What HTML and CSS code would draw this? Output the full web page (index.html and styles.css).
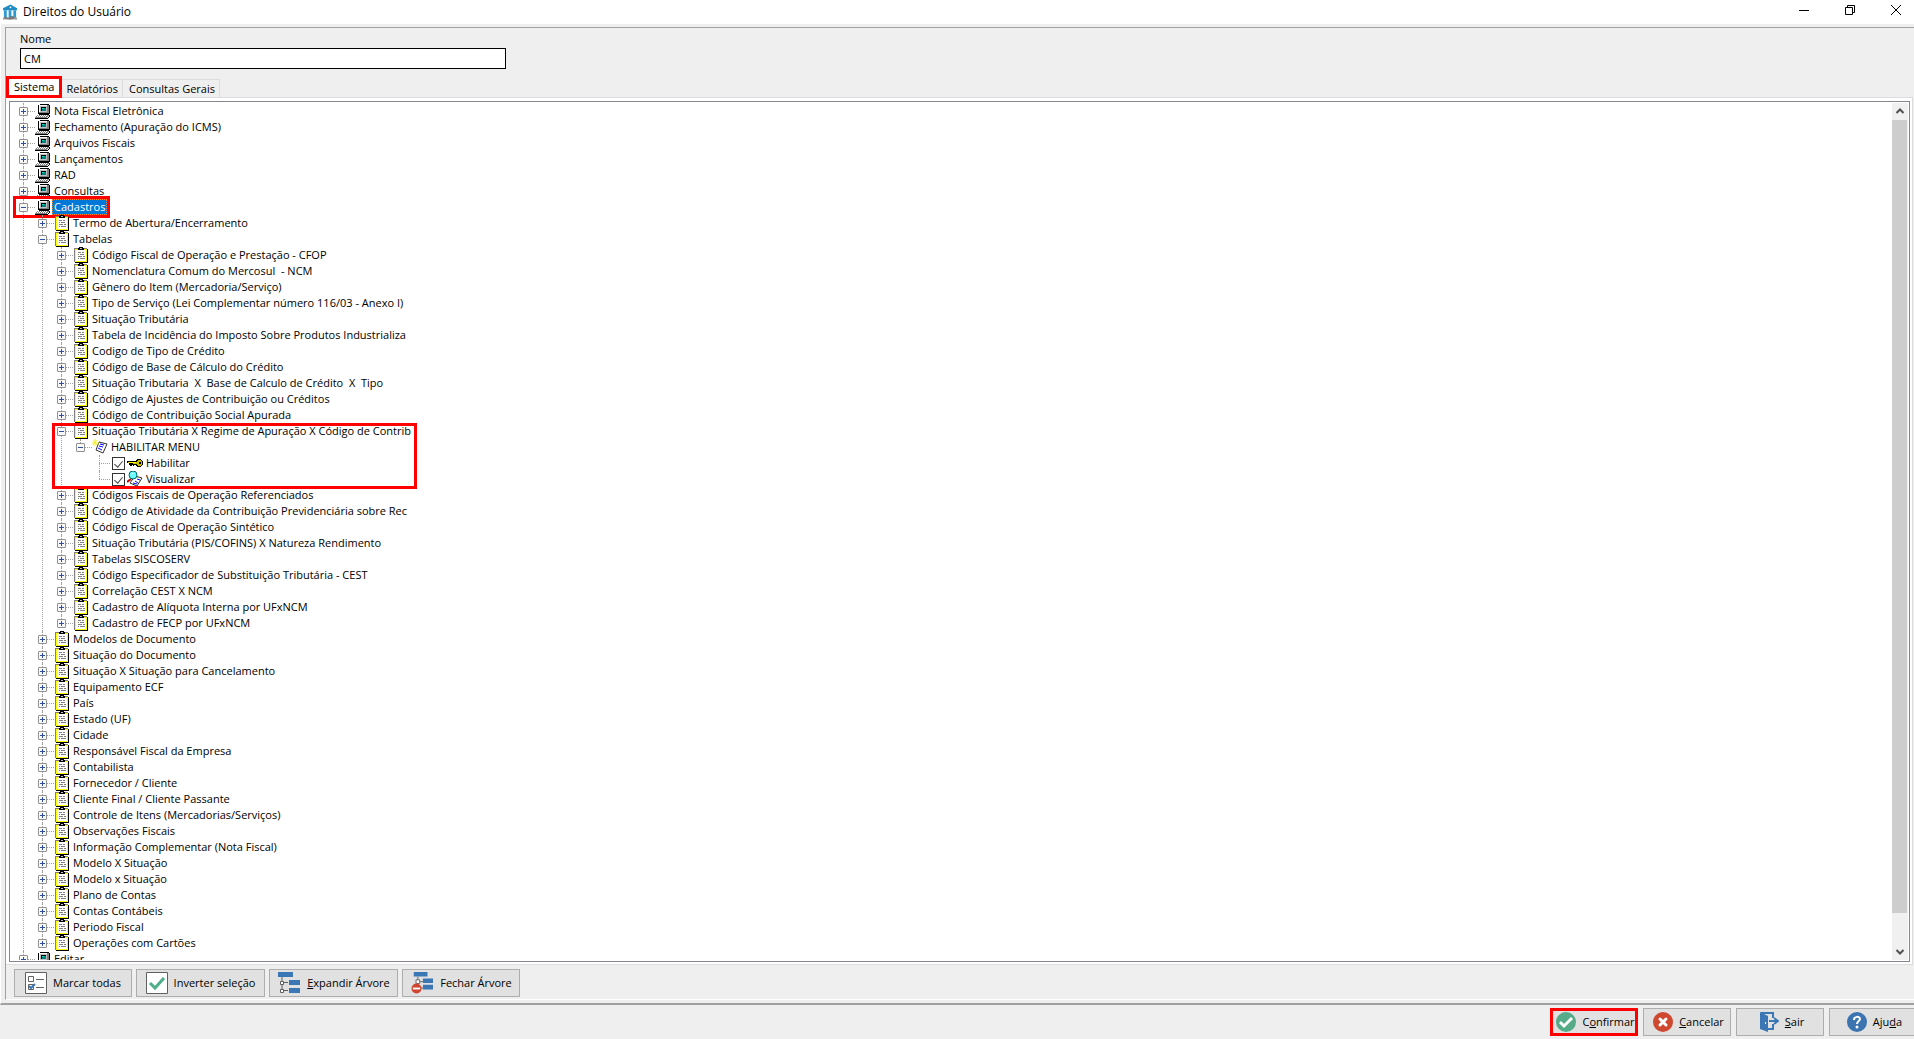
FILE: index.html
```html
<!DOCTYPE html>
<html lang="pt-BR">
<head>
    <meta charset="UTF-8">
    <meta name="viewport" content="width=device-width, initial-scale=1.0">
    <title>Direitos do Usuário</title>
    <link rel="stylesheet" href="styles.css">
</head>
<body>
    <!-- tree icons -->
    <svg class="sprite" aria-hidden="true">
        <symbol id="icon-computer" viewBox="0 0 16 16" shape-rendering="crispEdges">
            <path fill="#000" d="M5 1h9v1h1v9h-1v1H4v-1H3V2h2z"/>
            <path fill="#c0c0c0" d="M4 2h8v8H4z"/>
            <path fill="#808080" d="M12 2h2v8h-2zM4 9h8v1H4z"/>
            <path fill="#fff" d="M4 2h8v1H4zM4 2h1v7H4z"/>
            <path fill="#000" d="M6 4h5v4H6z"/>
            <path fill="#008080" d="M7 5h4v3H7z"/>
            <path fill="#00e0c0" d="M7 5h2v1H7z"/>
            <path fill="#808080" d="M2 12h12v1h-1v1h-1v1H0v-1h1v-1h1z"/>
            <path fill="#fff" d="M3 12h1v1H3zM5 12h1v1H5zM7 12h1v1H7zM9 12h1v1H9zM11 12h1v1h-1zM2 13h1v1H2zM4 13h1v1H4zM6 13h1v1H6zM8 13h1v1H8zM10 13h1v1h-1z"/>
            <path fill="#000" d="M0 15h13v1H0zM13 14h1v1h-1zM14 12h1v2h-1z"/>
        </symbol>
        <symbol id="icon-clipboard" viewBox="0 0 16 16" shape-rendering="crispEdges">
            <path fill="#000" d="M2 2h13v14H2z"/>
            <path fill="#808080" d="M1 1h13v14H1z"/>
            <path fill="#ff0" d="M2 2h12v13H2z"/>
            <path fill="#fff" d="M3 3h10v11H3z"/>
            <path fill="#000" d="M6 0h4v1h1v2H5V1h1z"/>
            <path fill="#c0c0c0" d="M7 1h2v1H7z"/>
            <path fill="#808080" d="M5 5h3v1H5zM9 5h2v1H9zM5 7h1v1H5zM7 7h4v1H7zM5 9h4v1H5zM10 9h2v1h-2zM5 11h1v1H5zM7 11h5v1H7z"/>
        </symbol>
        <symbol id="icon-note" viewBox="0 0 16 16">
            <path d="M7 3l8 2-4 9-7-3z" fill="#fff" stroke="#333"/>
            <path d="M8 5l4 1M7 7l4 1M6 9l4 2" stroke="#00f" fill="none"/>
            <path d="M3 0v7M0 4h7M1 1l4 5M5 1L1 6" stroke="#f5ee31" fill="none"/>
        </symbol>
        <symbol id="icon-key" viewBox="0 0 16 16" shape-rendering="crispEdges">
            <path fill="#000" d="M0 6h9V5h1V4h4v1h1v1h1v4h-1v1h-1v1h-4v-1H9v-1H7v1H6v-1H5v1H3v-1H2V8H0z"/>
            <path fill="#c8c000" d="M1 7h9V6h1V5h3v1h1v4h-1v1h-3v-1h-1V9H6V8H1z"/>
            <path fill="#000" d="M12 7h2v2h-2z"/>
            <path fill="#ff0" d="M2 7h7v1H2z"/>
        </symbol>
        <symbol id="icon-view" viewBox="0 0 16 16">
            <path d="M8 5l7 2-5 8-7-3z" fill="#fff" stroke="#333"/>
            <path d="M10 8l3 1M8 10l3 2M6 12l4 1" stroke="#00f" fill="none"/>
            <path d="M4 8L0 11" stroke="#c00" stroke-width="2"/>
            <circle cx="6" cy="4" r="4" fill="#6ff" stroke="#066"/>
            <path d="M4 4l2-2" stroke="#fff"/>
        </symbol>
    </svg>

    <header class="titlebar">
        <svg class="app-icon" viewBox="0 0 16 17" aria-hidden="true">
            <path d="M0 4L8 0l7 4v2H0z" fill="#1f8cc4"/>
            <circle cx="8" cy="3" r="1" fill="#fff"/>
            <path d="M1 6h3v8H1zM6 6h3v8H6zM11 6h3v8h-3z" fill="#2a9ad2"/>
            <path d="M0 14h15v2H0z" fill="#9a9a9a"/>
            <path d="M1 13l5 1 4-2 3 2-5 2-6-1z" fill="#777"/>
        </svg>
        <h1>Direitos do Usuário</h1>
        <div class="window-controls">
            <button type="button" aria-label="Minimizar"><svg viewBox="0 0 10 10"><path d="M0 5.500h10"/></svg></button>
            <button type="button" aria-label="Restaurar"><svg viewBox="0 0 10 10"><path d="M.5 2.500h7v7h-7zM2.500 2.500v-2h7v7h-2"/></svg></button>
            <button type="button" aria-label="Fechar"><svg viewBox="0 0 10 10"><path d="M0 0l10 10M10 0L0 10"/></svg></button>
        </div>
    </header>

    <main class="content">
        <div class="group">
            <div class="field">
                <label for="nome">Nome</label>
                <input type="text" id="nome" name="nome" value="CM">
            </div>

            <div class="tabs" role="tablist">
                <button type="button" class="tab active" role="tab" aria-selected="true">Sistema</button>
                <button type="button" class="tab" role="tab" aria-selected="false">Relatórios</button>
                <button type="button" class="tab" role="tab" aria-selected="false">Consultas Gerais</button>
            </div>

            <section class="tab-page">
                <div class="tree-box">
                    <ul class="tree" id="tree"></ul>
                    <div class="scrollbar" aria-hidden="true">
                        <svg viewBox="0 0 16 17"><path d="M4.500 10L8 6.500l3.500 3.500"/></svg>
                        <div class="track"><div class="thumb"></div></div>
                        <svg viewBox="0 0 16 17"><path d="M4.500 7L8 10.500 11.500 7"/></svg>
                    </div>
                </div>
            </section>

            <div class="toolbar">
                <button type="button" class="btn">
                    <svg class="icon-box" viewBox="0 0 22 22">
                        <path d="M.5.5h21v21H.5z" fill="#fff" stroke="#606060"/>
                        <path d="M3.500 4.500h5v5h-5zM3.500 12.500h5v5h-5zM11 7.500h8M11 15.500h8" fill="none" stroke="#606060"/>
                        <path d="M4 14l2 2 4-4" fill="none" stroke="#3b77b5" stroke-width="2"/>
                    </svg>
                    <span>Marcar todas</span>
                </button>
                <button type="button" class="btn wide">
                    <svg class="icon-box" viewBox="0 0 22 22">
                        <path d="M.5.5h21v21H.5z" fill="#fff" stroke="#606060"/>
                        <path d="M4 11l5 5 9-10" fill="none" stroke="#4caf87" stroke-width="3"/>
                    </svg>
                    <span>Inverter seleção</span>
                </button>
                <button type="button" class="btn wide">
                    <svg class="icon-tree" viewBox="0 0 24 22">
                        <path d="M5 5v14M5 10.500h6M5 18.500h6" fill="none" stroke="#606060"/>
                        <path d="M1 0h15v5H1zM12 8h11v5H12zM12 16h11v5H12z" fill="#3b77b5"/>
                        <path d="M3.500 9.500h3v3h-3zM3.500 17.500h3v3h-3z" fill="#fff" stroke="#606060"/>
                    </svg>
                    <span><u>E</u>xpandir Árvore</span>
                </button>
                <button type="button" class="btn">
                    <svg class="icon-tree" viewBox="0 0 24 24">
                        <path d="M7.500 5v4M9 10.500h5M10 17.500h4" fill="none" stroke="#606060"/>
                        <path d="M3 0h15v5H3zM13 7h11v5H13zM13 14h11v5H13z" fill="#3b77b5"/>
                        <path d="M5.500 8.500h4v4h-4z" fill="#fff" stroke="#606060"/>
                        <circle cx="6" cy="18" r="5.500" fill="#d0452f"/>
                        <path d="M2 17h8v2H2z" fill="#fff"/>
                    </svg>
                    <span>Fechar Árvore</span>
                </button>
            </div>
        </div>
    </main>

    <footer class="actions">
        <button type="submit" class="btn highlight">
            <svg class="icon-round" viewBox="0 0 20 20">
                <circle cx="10" cy="10" r="10" fill="#55ab88"/>
                <path d="M4 10l4 4 8-8" fill="none" stroke="#fff" stroke-width="3"/>
            </svg>
            <span>C<u>o</u>nfirmar</span>
        </button>
        <button type="button" class="btn">
            <svg class="icon-round" viewBox="0 0 20 20">
                <circle cx="10" cy="10" r="10" fill="#cf4830"/>
                <path d="M7 7l6 6M13 7l-6 6" fill="none" stroke="#fff" stroke-width="3" stroke-linecap="round"/>
            </svg>
            <span><u>C</u>ancelar</span>
        </button>
        <button type="button" class="btn">
            <svg class="icon-round" viewBox="0 0 20 20">
                <path d="M2 1h12v5M14 12v5H9" fill="none" stroke="#3b77b5" stroke-width="2"/>
                <path d="M1 0l8 4v16l-8-3z" fill="#3b77b5"/>
                <path d="M10 9h8M15 6l4 3-4 3" fill="none" stroke="#3b77b5" stroke-width="2"/>
                <path d="M6 10h1v2H6z" fill="#fff"/>
            </svg>
            <span><u>S</u>air</span>
        </button>
        <button type="button" class="btn">
            <svg class="icon-round" viewBox="0 0 20 20">
                <circle cx="10" cy="10" r="10" fill="#3b74b1"/>
                <path d="M7 8c0-4 6-4 6-1 0 2-3 2-3 5" fill="none" stroke="#fff" stroke-width="2"/>
                <circle cx="10" cy="15" r="1.500" fill="#fff"/>
            </svg>
            <span>Aju<u>d</u>a</span>
        </button>
    </footer>

    <script src="tree.js"></script>
</body>
</html>
```

FILE: styles.css
```css
*,
*::before,
*::after {
    box-sizing: border-box;
}

body {
    display: flex;
    flex-direction: column;
    height: 100vh;
    margin: 0;
    overflow: hidden;
    background-color: #efefef;
    color: #000;
    font-family: "Open Sans", "Noto Sans", sans-serif;
    font-size: 11px;
    line-height: 16px;
}

button,
input {
    font: inherit;
    color: inherit;
}

svg {
    display: block;
    flex: none;
}

.sprite {
    position: absolute;
    width: 0;
    height: 0;
}

/* title bar */
.titlebar {
    display: flex;
    align-items: center;
    flex: none;
    height: 24px;
    padding: 0 13px 0 3px;
    background-color: #fff;
}

.titlebar h1 {
    flex: 1;
    margin: 0 0 0 5px;
    font-size: 12px;
    font-weight: normal;
}

.app-icon {
    width: 15px;
    height: 17px;
}

.window-controls {
    display: flex;
    gap: 36px;
    padding-bottom: 4px;
}

.window-controls button {
    padding: 0;
    border: none;
    background: none;
}

.window-controls svg {
    width: 10px;
    height: 10px;
    fill: none;
    stroke: #000;
}

/* main panel */
.content {
    display: flex;
    flex: 1;
    min-height: 0;
    padding: 3px 0 3px 4px;
    border-left: 1px solid #fff;
    border-bottom: 2px solid #a0a0a0;
}

.group {
    display: flex;
    flex-direction: column;
    flex: 1;
    min-width: 0;
    border-top: 1px solid #a0a0a0;
    border-left: 1px solid #a0a0a0;
    border-bottom: 1px solid #fff;
}

.field {
    padding: 3px 14px 7px;
}

.field label {
    display: block;
    margin-bottom: 1px;
}

.field input {
    display: block;
    width: 486px;
    height: 21px;
    padding: 0 3px;
    border: 1px solid #000;
    background-color: #fff;
}

.tabs {
    display: flex;
    align-items: flex-end;
}

.tab {
    height: 18px;
    padding: 0 4px;
    border: 1px solid #dcdcdc;
    border-left: none;
    border-bottom: none;
    background-color: #efefef;
    white-space: nowrap;
}

.tab:last-child {
    padding-left: 6px;
}

.tab.active {
    position: relative;
    height: 22px;
    margin-bottom: -1px;
    padding: 0 5px;
    border: 3px solid #f00;
    background-color: #fff;
}

.tab-page {
    display: flex;
    flex: 1;
    min-height: 0;
    margin-right: 1px;
    padding: 3px 2px 2px 3px;
    border: 1px solid #dcdcdc;
    border-left: none;
    background-color: #fff;
}

.tree-box {
    display: flex;
    flex: 1;
    min-width: 0;
    overflow: hidden;
    padding: 1px;
    border: 1px solid #828790;
}

/* tree */
.tree,
.tree ul {
    margin: 0;
    padding: 0;
    list-style: none;
}

.tree {
    flex: 1;
    overflow: hidden;
    padding-left: 8px;
}

.tree ul {
    padding-left: 19px;
}

.tree li {
    position: relative;
}

/* dotted connector that links an item to the next one */
.tree li::before {
    content: "";
    position: absolute;
    top: 0;
    bottom: 0;
    left: 4px;
    border-left: 1px dotted #a0a0a0;
}

.tree li:last-child::before {
    bottom: auto;
    height: 8px;
}

.row {
    display: flex;
    align-items: center;
    height: 16px;
    white-space: pre;
}

.expander {
    position: relative;
    width: 9px;
    height: 9px;
    flex: none;
    padding: 0;
    border: 1px solid #919191;
    border-radius: 1px;
    background: linear-gradient(#2f4fa0, #2f4fa0) center / 5px 1px no-repeat, #f8f8f8;
}

.expander.closed {
    background: linear-gradient(#2f4fa0, #2f4fa0) center / 5px 1px no-repeat,
        linear-gradient(#2f4fa0, #2f4fa0) center / 1px 5px no-repeat, #f8f8f8;
}

.dots {
    width: 7px;
    flex: none;
    border-top: 1px dotted #a0a0a0;
}

.row .icon {
    width: 16px;
    height: 16px;
    margin-right: 1px;
}

.row .text {
    padding: 0 2px;
}

.row.selected .text {
    background-color: #0078d7;
    color: #fff;
    outline: 1px dotted #f08728;
    outline-offset: -1px;
}

.leaf .dots {
    width: 11px;
    margin-left: 4px;
}

.leaf input {
    appearance: none;
    position: relative;
    flex: none;
    width: 13px;
    height: 13px;
    margin: 0 2px;
    border: 1px solid #333;
    background-color: #fff;
}

.leaf input:checked::after {
    content: "";
    position: absolute;
    top: 1px;
    left: 3px;
    width: 5px;
    height: 8px;
    border: solid #444;
    border-width: 0 1px 1px 0;
    transform: rotate(40deg);
}

/* red marks around the relevant items */
.row.marked {
    position: relative;
    width: fit-content;
}

.row.marked::after {
    content: "";
    position: absolute;
    inset: -3px -3px -3px -6px;
    border: 3px solid #f00;
    pointer-events: none;
}

.tree li.marked::after {
    content: "";
    position: absolute;
    top: 0;
    bottom: -2px;
    left: -5px;
    width: 365px;
    border: 3px solid #f00;
    z-index: 1;
    pointer-events: none;
}

/* scrollbar */
.scrollbar {
    display: flex;
    flex-direction: column;
    flex: none;
    width: 16px;
    background-color: #f0f0f0;
}

.scrollbar svg {
    width: 16px;
    height: 17px;
    fill: none;
    stroke: #505050;
    stroke-width: 2;
}

.track {
    flex: 1;
}

.thumb {
    height: calc(100% - 30px);
    margin-right: 1px;
    background-color: #cdcdcd;
}

/* buttons */
.btn {
    display: flex;
    align-items: center;
    justify-content: center;
    gap: 6px;
    min-width: 118px;
    height: 28px;
    padding: 0;
    border: 1px solid #adadad;
    background-color: #e1e1e1;
    white-space: nowrap;
}

.btn.wide {
    min-width: 129px;
}

.btn:hover {
    background-color: #e5f1fb;
    border-color: #0078d7;
}

.toolbar {
    display: flex;
    flex: none;
    gap: 4px;
    padding: 4px 8px 2px;
}

.icon-box {
    width: 22px;
    height: 22px;
}

.icon-tree {
    width: 24px;
    height: 22px;
}

.icon-round {
    width: 20px;
    height: 20px;
}

.actions {
    display: flex;
    flex: none;
    justify-content: flex-end;
    gap: 5px;
    margin-right: -3px;
    padding: 3px 0;
}

.actions .btn {
    min-width: 88px;
    padding-left: 3px;
}

.actions .highlight {
    position: relative;
}

.actions .highlight::after {
    content: "";
    position: absolute;
    inset: -1px;
    border: 3px solid #f00;
}
```

FILE: tree.js
```js
const tabelas = [
    'Código Fiscal de Operação e Prestação - CFOP',
    'Nomenclatura Comum do Mercosul  - NCM',
    'Gênero do Item (Mercadoria/Serviço)',
    'Tipo de Serviço (Lei Complementar número 116/03 - Anexo I)',
    'Situação Tributária',
    'Tabela de Incidência do Imposto Sobre Produtos Industrializa',
    'Codigo de Tipo de Crédito',
    'Código de Base de Cálculo do Crédito',
    'Situação Tributaria  X  Base de Calculo de Crédito  X  Tipo',
    'Código de Ajustes de Contribuição ou Créditos',
    'Código de Contribuição Social Apurada',
    {
        text: 'Situação Tributária X Regime de Apuração X Código de Contrib',
        markGroup: true,
        children: [{
            text: 'HABILITAR MENU',
            icon: 'note',
            children: [
                { text: 'Habilitar', icon: 'key', checked: true },
                { text: 'Visualizar', icon: 'view', checked: true }
            ]
        }]
    },
    'Códigos Fiscais de Operação Referenciados',
    'Código de Atividade da Contribuição Previdenciária sobre Rec',
    'Código Fiscal de Operação Sintético',
    'Situação Tributária (PIS/COFINS) X Natureza Rendimento',
    'Tabelas SISCOSERV',
    'Código Especificador de Substituição Tributária - CEST',
    'Correlação CEST X NCM',
    'Cadastro de Alíquota Interna por UFxNCM',
    'Cadastro de FECP por UFxNCM'
];

const cadastros = [
    'Termo de Abertura/Encerramento',
    { text: 'Tabelas', children: tabelas },
    'Modelos de Documento',
    'Situação do Documento',
    'Situação X Situação para Cancelamento',
    'Equipamento ECF',
    'País',
    'Estado (UF)',
    'Cidade',
    'Responsável Fiscal da Empresa',
    'Contabilista',
    'Fornecedor / Cliente',
    'Cliente Final / Cliente Passante',
    'Controle de Itens (Mercadorias/Serviços)',
    'Observações Fiscais',
    'Informação Complementar (Nota Fiscal)',
    'Modelo X Situação',
    'Modelo x Situação',
    'Plano de Contas',
    'Contas Contábeis',
    'Periodo Fiscal',
    'Operações com Cartões'
];

const sistema = [
    'Nota Fiscal Eletrônica',
    'Fechamento (Apuração do ICMS)',
    'Arquivos Fiscais',
    'Lançamentos',
    'RAD',
    'Consultas',
    { text: 'Cadastros', selected: true, children: cadastros },
    'Editar'
];

function icon(name) {
    return `<svg class="icon" aria-hidden="true"><use href="#icon-${name}"></use></svg>`;
}

function addItems(list, items, level) {
    items.forEach((entry) => {
        const item = typeof entry === 'string' ? { text: entry } : entry;
        const name = item.icon || (level === 0 ? 'computer' : 'clipboard');
        const li = document.createElement('li');
        const row = document.createElement('div');
        row.className = 'row';

        if (item.checked !== undefined) {
            const id = 'perm-' + item.icon;
            row.classList.add('leaf');
            row.innerHTML = `<span class="dots"></span><input type="checkbox" id="${id}" checked>${icon(name)}<label class="text" for="${id}">${item.text}</label>`;
        } else {
            const state = item.children ? '' : ' closed';
            row.innerHTML = `<button type="button" class="expander${state}" aria-label="${item.text}"></button><span class="dots"></span>${icon(name)}<span class="text">${item.text}</span>`;
        }
        if (item.selected) {
            row.classList.add('selected', 'marked');
        }
        if (item.markGroup) {
            li.classList.add('marked');
        }
        li.appendChild(row);

        if (item.children) {
            const ul = document.createElement('ul');
            addItems(ul, item.children, level + 1);
            li.appendChild(ul);
            const expander = row.querySelector('.expander');
            expander.addEventListener('click', () => {
                ul.hidden = !ul.hidden;
                expander.classList.toggle('closed', ul.hidden);
            });
        }
        list.appendChild(li);
    });
}

addItems(document.getElementById('tree'), sistema, 0);
```
